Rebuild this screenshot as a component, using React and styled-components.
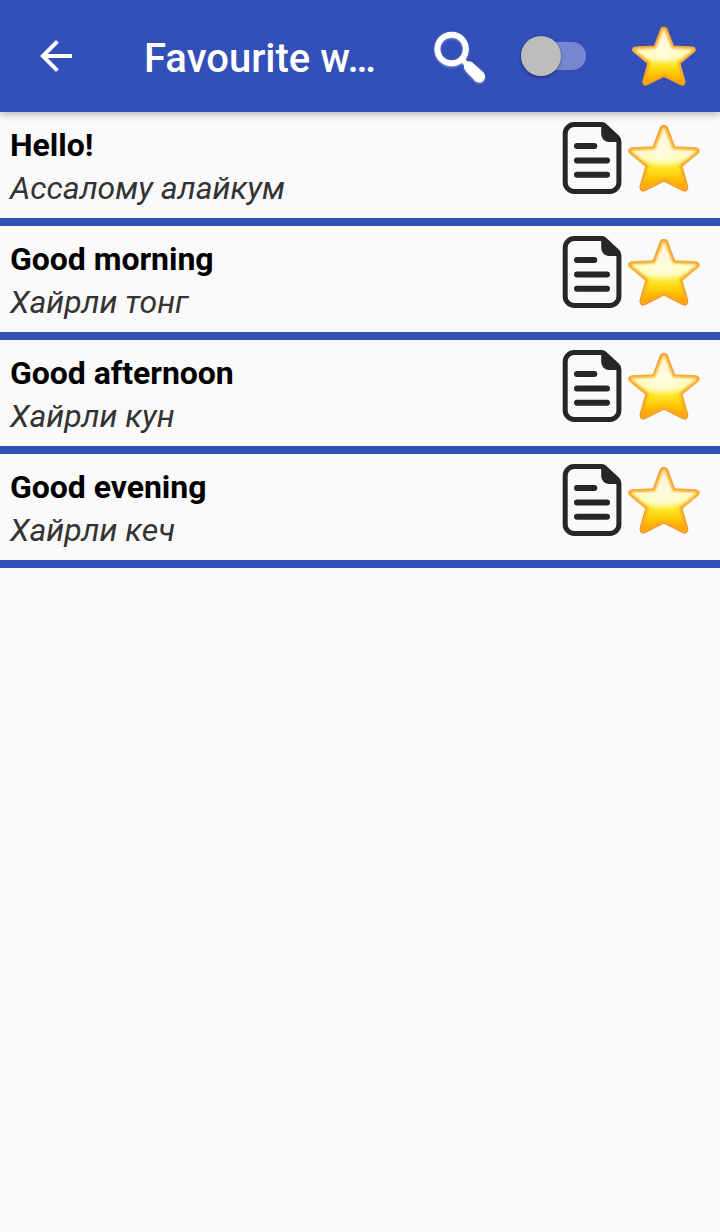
import React, { useId } from "react";
import styled, { createGlobalStyle } from "styled-components";

const phrases = [
  { title: "Hello!", translation: "Ассалому алайкум" },
  { title: "Good morning", translation: "Хайрли тонг" },
  { title: "Good afternoon", translation: "Хайрли кун" },
  { title: "Good evening", translation: "Хайрли кеч" },
];

export default function App() {
  return (
    <>
      <GlobalStyle />
      <Toolbar>
        <BackButton aria-label="Back">
          <BackIcon />
        </BackButton>
        <Title>Favourite w…</Title>
        <SearchIcon />
        <Switch>
          <Thumb />
        </Switch>
        <StarIcon size={64} />
      </Toolbar>
      <List>
        {phrases.map((phrase) => (
          <Row key={phrase.title}>
            <TextWrapper>
              <Phrase>{phrase.title}</Phrase>
              <Translation>{phrase.translation}</Translation>
            </TextWrapper>
            <Actions>
              <NoteIcon />
              <StarIcon size={72} />
            </Actions>
          </Row>
        ))}
      </List>
    </>
  );
}

function BackIcon() {
  return (
    <svg width="48" height="48" viewBox="0 0 24 24" fill="#fff">
      <path d="M20 11H7.83l5.59-5.59L12 4l-8 8 8 8 1.41-1.41L7.83 13H20v-2z" />
    </svg>
  );
}

function SearchIcon() {
  return (
    <SearchSvg width="56" height="56" viewBox="0 0 56 56" fill="none">
      <circle cx="22.6" cy="21" r="14.2" stroke="#fff" strokeWidth="6" />
      <path d="M32 30.4L39 37.4" stroke="#fff" strokeWidth="5" />
      <path
        d="M36 36Q38.4 31.6 42.8 34L54 44C59.4 49.6 53 57.4 46.6 53.4L37 43.2Q33.6 39.4 36 36Z"
        fill="#fff"
      />
    </SearchSvg>
  );
}

function NoteIcon() {
  return (
    <svg width="72" height="72" viewBox="0 0 72 72" fill="none">
      <path
        d="M17.5 2.6H45.5Q47.6 2.6 49 4L61.3 15.6Q62.9 17.2 62.9 19.4V60.4A9 9 0 0 1 53.9 69.4H18.2A9 9 0 0 1 9.2 60.4V11.6A9 9 0 0 1 18.2 2.6Z"
        stroke="#262626"
        strokeWidth="5"
        strokeLinejoin="round"
      />
      <path
        d="M45.2 2V12A8 8 0 0 0 53.2 20H63.5V17.5L48 3Z"
        fill="#262626"
      />
      <path
        d="M21 24H38.3M21 38.4H51M21 52.7H51"
        stroke="#262626"
        strokeWidth="6"
        strokeLinecap="round"
      />
    </svg>
  );
}

const starPath =
  "M32.2 6.2C33.2 2.6 38.6 2.6 39.6 6.2L46.6 24.8L67.2 25.8C72 26.2 72.2 29.8 69 32L54 44.2L59.6 64.2C60.2 68.4 57.4 69.8 54.2 68.2L35.9 59L17.6 68.2C14.4 69.8 11.6 68.4 12.2 64.2L17.8 44.2L2.8 32C-0.4 29.8 -0.2 26.2 4.6 25.8L25.2 24.8Z";

function StarIcon({ size }) {
  const id = useId();

  return (
    <svg width={size} height={size} viewBox="0 0 72 72">
      <defs>
        <linearGradient id={`${id}-body`} x1="0" y1="0" x2="0" y2="1">
          <stop offset="0" stopColor="#ffeec0" />
          <stop offset="0.3" stopColor="#fffbe0" />
          <stop offset="0.52" stopColor="#fffcb4" />
          <stop offset="0.64" stopColor="#ffe628" />
          <stop offset="0.8" stopColor="#ffc805" />
          <stop offset="1" stopColor="#ff9004" />
        </linearGradient>
        <linearGradient id={`${id}-edge`} x1="0" y1="0" x2="0" y2="1">
          <stop offset="0" stopColor="#e59a35" />
          <stop offset="0.5" stopColor="#f4b040" />
          <stop offset="1" stopColor="#ee8f20" />
        </linearGradient>
        <radialGradient id={`${id}-glow`}>
          <stop offset="0" stopColor="#fffce0" />
          <stop offset="1" stopColor="#fffce0" stopOpacity="0" />
        </radialGradient>
        <filter id={`${id}-soft`}>
          <feGaussianBlur stdDeviation="1.2" />
        </filter>
        <clipPath id={`${id}-clip`}>
          <path d={starPath} />
        </clipPath>
      </defs>
      <path d={starPath} fill={`url(#${id}-body)`} />
      <g clipPath={`url(#${id}-clip)`}>
        <ellipse cx="35" cy="33" rx="20" ry="13" fill={`url(#${id}-glow)`} />
        <path
          d={starPath}
          fill="none"
          stroke="#ffac24"
          strokeWidth="5"
          filter={`url(#${id}-soft)`}
        />
      </g>
      <path
        d={starPath}
        fill="none"
        stroke={`url(#${id}-edge)`}
        strokeWidth="1.2"
        strokeLinejoin="round"
      />
    </svg>
  );
}

const GlobalStyle = createGlobalStyle`
  * {
    box-sizing: border-box;
  }

  body {
    margin: 0;
    min-height: 100vh;
    background: #fafafa;
    font-family: Roboto, sans-serif;
  }

  svg {
    display: block;
    flex-shrink: 0;
  }
`;

const Toolbar = styled.header`
  position: relative;
  display: flex;
  align-items: center;
  height: 112px;
  padding: 0 24px 0 32px;
  background: #334fb8;
  box-shadow: 0 2px 8px rgba(0, 0, 0, 0.3);
`;

const BackButton = styled.button`
  padding: 0;
  border: 0;
  background: none;
`;

const Title = styled.h1`
  flex: 1;
  margin: 6px 0 0 64px;
  color: #fff;
  font-size: 40px;
  font-weight: 500;
  line-height: 48px;
  white-space: nowrap;
`;

const SearchSvg = styled.svg`
  margin-right: 39.5px;
  filter: drop-shadow(0 1px 1px rgba(255, 255, 255, 0.4));
`;

const Switch = styled.div`
  display: flex;
  align-items: center;
  width: 62px;
  height: 28px;
  margin-right: 46px;
  border-radius: 14px;
  background: #7788d0;
`;

const Thumb = styled.div`
  width: 40px;
  height: 40px;
  margin-left: -3px;
  border-radius: 50%;
  background: #bdbdbd;
  box-shadow: 0 1px 3px rgba(0, 0, 0, 0.45);
`;

const List = styled.ul`
  margin: 0;
  padding: 0;
  list-style: none;
`;

const Row = styled.li`
  display: flex;
  justify-content: space-between;
  height: 114px;
  padding: 10px 20px 0 10px;
  border-bottom: 8px solid #334fb8;
`;

const TextWrapper = styled.div`
  display: grid;
  align-content: start;
  row-gap: 5px;
  margin-top: 4px;
`;

const Phrase = styled.div`
  color: #000;
  font-size: 32px;
  font-weight: bold;
  line-height: 38px;
  letter-spacing: -0.04px;
`;

const Translation = styled.div`
  color: #333;
  font-size: 32px;
  font-style: italic;
  line-height: 38px;
`;

const Actions = styled.div`
  display: flex;
`;
